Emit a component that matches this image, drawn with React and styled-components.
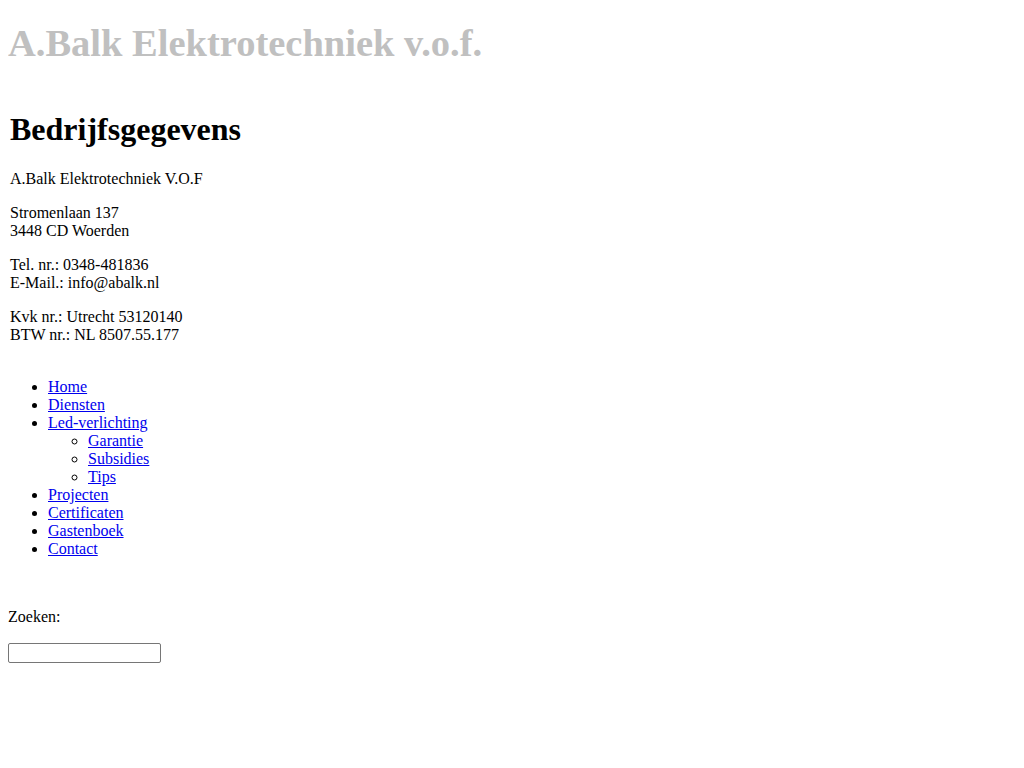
import { createGlobalStyle, styled } from "styled-components";

const GlobalStyle = createGlobalStyle`
  body {
    margin: 8px;
    font-family: "Liberation Serif", "Times New Roman", serif;
    font-size: 16px;
    color: #000;
    background: #fff;
  }
`;

const Header = styled.div`
  padding-top: 12px;
  height: 70px;
`;

const SiteTitle = styled.div`
  font-size: 38.5px;
  font-weight: bold;
  color: #c0c0c0;
  line-height: 46px;
`;

const Info = styled.div`
  padding-left: 2px;
  padding-bottom: 2px;
`;

const Heading = styled.h1`
  font-size: 32px;
  font-weight: bold;
  margin: 21px 0 22px;
`;

const Para = styled.p`
  margin: 16px 0;
  line-height: 18px;
`;

const Menu = styled.ul`
  margin: 16px 0 50px;
  padding-left: 40px;
  line-height: 18px;
  list-style: ${(p) => (p.$sub ? "circle" : "disc")};

  ${(p) => p.$sub && "margin: 0;"}
`;

const Link = styled.a`
  color: #0000ee;
  text-decoration: underline;
`;

const SearchLabel = styled.p`
  margin: 16px 0 17px;
  line-height: 18px;
`;

const SearchInput = styled.input`
  box-sizing: border-box;
  display: block;
  width: 153px;
  height: 20px;
  padding: 1px 2px;
  border: 1px solid #767676;
  border-radius: 2px;
  font-size: 13px;
`;

function App() {
  return (
    <>
      <GlobalStyle />
      <Header>
        <SiteTitle>A.Balk Elektrotechniek v.o.f.</SiteTitle>
      </Header>
      <Info>
        <Heading>Bedrijfsgegevens</Heading>
        <Para>A.Balk Elektrotechniek V.O.F</Para>
        <Para>
          Stromenlaan 137
          <br />
          3448 CD Woerden
        </Para>
        <Para>
          Tel. nr.: 0348-481836
          <br />
          E-Mail.: info@abalk.nl
        </Para>
        <Para>
          Kvk nr.: Utrecht 53120140
          <br />
          BTW nr.: NL 8507.55.177
        </Para>
      </Info>
      <Menu>
        <li><Link href="#">Home</Link></li>
        <li><Link href="#">Diensten</Link></li>
        <li>
          <Link href="#">Led-verlichting</Link>
          <Menu $sub>
            <li><Link href="#">Garantie</Link></li>
            <li><Link href="#">Subsidies</Link></li>
            <li><Link href="#">Tips</Link></li>
          </Menu>
        </li>
        <li><Link href="#">Projecten</Link></li>
        <li><Link href="#">Certificaten</Link></li>
        <li><Link href="#">Gastenboek</Link></li>
        <li><Link href="#">Contact</Link></li>
      </Menu>
      <SearchLabel>Zoeken:</SearchLabel>
      <SearchInput type="text" />
    </>
  );
}

export default App;
